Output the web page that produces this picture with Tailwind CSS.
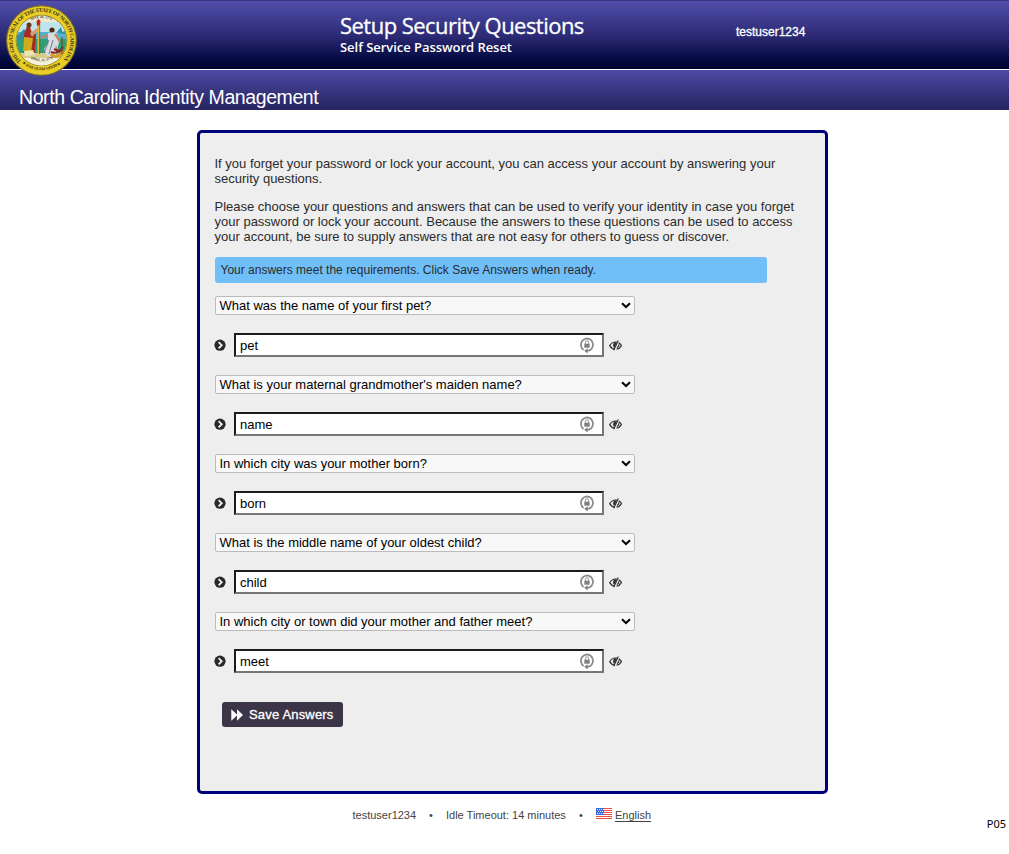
<!DOCTYPE html>
<html lang="en">
<head>
<meta charset="utf-8">
<title>Setup Security Questions</title>
<script src="https://cdn.jsdelivr.net/npm/@tailwindcss/browser@4"></script>
</head>
<body class="h-[854px] overflow-hidden bg-white font-['Liberation_Sans',Arial,sans-serif] text-[13px] leading-[15px] text-[#2b2b2b]">
<svg class="hidden">
  <symbol id="arrow" viewBox="0 0 12 12"><circle cx="6" cy="6.200" r="5.6" fill="#292929"/><path d="M4.6 3.100 7.7 6.200 4.6 9.300" fill="none" stroke="#eee" stroke-width="1.9"/></symbol>
  <symbol id="lock" viewBox="0 0 14 17"><path d="M3.600 13A6 6.300 0 1 1 11.600 11.800Q10 13.700 6.500 13.900" fill="none" stroke="#8b8b8b" stroke-width="1.800"/><path d="M4.200 13.800 7.600 11.200V16.600Z" fill="#808080"/><path d="M4.300 6.700h5.400v4H4.300z" fill="#808080"/><path d="M5.400 7V5.400a1.600 1.600 0 0 1 3.200 0V7" fill="none" stroke="#909090" stroke-width="1"/></symbol>
  <symbol id="eye" viewBox="0 0 13 11"><path d="M6 9.2C3.600 9 1.700 7.500.7 5.600 2.200 3.200 4.200 2 6.500 2l1.400.2M9.700 2.900C11 3.600 11.900 4.600 12.400 5.600 11.300 7.600 9.600 8.900 7.500 9.200" fill="none" stroke="#303030" stroke-width="1.200"/><path d="M6.300 2.600C3.800 3 3.300 6.300 5.200 7.900L7.800 2.900Z" fill="#303030"/><path d="M9.300.6 4.700 10.200M10 4.300Q9.900 6.800 7.900 7.600" fill="none" stroke="#303030" stroke-width="1.100"/></symbol>
  <symbol id="chev" viewBox="0 0 10 7"><path d="M1 1.200 5 5 9 1.200" fill="none" stroke="#000" stroke-width="2"/></symbol>
</svg>
<header class="relative h-[110px] text-white">
  <div class="flex h-[70px] border-t border-b border-t-[#393783] border-b-white bg-linear-to-b from-[#504eaa] via-[#2d2b76] to-[#00002f]">
    <div class="ml-[340px] w-[396px] pt-[10px] font-['Open_Sans',sans-serif]">
      <h1 class="text-[22px] font-medium leading-[28px] tracking-[-0.53px] whitespace-nowrap [-webkit-text-stroke:0.3px_white]">Setup Security Questions</h1>
      <p class="mt-px text-[13px] font-semibold leading-[14px] tracking-[-0.04px] whitespace-nowrap">Self Service Password Reset</p>
    </div>
    <div class="pt-[24px] text-[12px] leading-[14px] [-webkit-text-stroke:0.3px_white]">testuser1234</div>
  </div>
  <div class="h-[40px] bg-linear-to-b from-[#4d4ba5] to-[#25235f] pl-[19px] pt-[15px] text-[19.500px] leading-[24px] tracking-[-0.410px] whitespace-nowrap">North Carolina Identity Management</div>
  <svg class="absolute left-[5px] top-[4px] h-[73px] w-[73px]" viewBox="0 0 73 73">
    <defs><path id="ringTop" d="M16.200 57.500A29 29 0 1 1 56.800 57.500"/><path id="ringBot" d="M17 59.300A31 31 0 0 0 56 59.300"/><path id="inTop" d="M19 22A23 23 0 0 1 54 22"/><path id="inBot" d="M24 53.500A23 23 0 0 0 49 53.500"/><clipPath id="sealClip"><circle cx="36.500" cy="36.500" r="25"/></clipPath></defs>
    <circle cx="36.500" cy="36.500" r="35.500" fill="#776b32"/><circle cx="36.500" cy="36.500" r="34.300" fill="#e9cf25"/><circle cx="36.500" cy="36.500" r="25.800" fill="#927f20"/>
    <g clip-path="url(#sealClip)">
      <path fill="#eee9cf" d="M10 10h54v54H10z"/><path fill="#c0e4ec" d="M10 18h54v11H10z"/><path fill="#54b2cf" d="M10 28h54v8H10z"/><path fill="#2e9f75" d="M10 35h54v14H10z"/><path fill="#d7cd8a" d="M10 49h54v5H10z"/><path fill="#f2efda" d="M10 54h54v10H10z"/>
      <path d="M12 32l7-7 5 6v5H12zM52 28l4-5 2 7zM57 29l3-3 1 5z" fill="#358da2"/>
      <path d="M22 22l3 1 2 6 4 1-1 19-12-1 1-18z" fill="#a42c24"/><path d="M19 33l9 1-2 14-8-1z" fill="#d3aa1e"/><path d="M25 29l9-6 1 2-8 8z" fill="#d79e6c"/><circle cx="24" cy="21" r="2.500" fill="#6a351e"/><path d="M33.500 20v30" stroke="#e0b83a" stroke-width="2"/><path d="M34.700 20v30" stroke="#6f311b" stroke-width=".6"/><path d="M31.500 17l2-2 2 2-.5 4-3 1z" fill="#c8251c"/><path d="M19 47l9-1 2 5-10 1z" fill="#ede5b0"/>
      <circle cx="47" cy="26" r="2.600" fill="#4f2918"/><path d="M43 29l8-1 3 10-2 9 2 6-12-1-3-7 4-6z" fill="#d9dce3"/><path d="M43 31l-7 3M50 30l5 8" stroke="#c78557" stroke-width="2"/><path d="M44 36l-5 13M48 36l-4 14M51 42l1 9" stroke="#6e7888" stroke-width="1"/><path d="M46 48c4 2 9 0 12-5M49 45l9 4" stroke="#8c241c" stroke-width="2" fill="none"/><path d="M46 50c3 4 9 3 12-3" stroke="#d49d23" stroke-width="3" fill="none"/><path d="M57 33v17" stroke="#653c24"/>
    </g>
    <g fill="#3e3512" font-family="Liberation Serif,serif" font-weight="700">
      <text font-size="5.600"><textPath href="#ringTop" textLength="134">THE GREAT SEAL OF THE STATE OF NORTH CAROLINA</textPath></text>
      <text font-size="4"><textPath href="#ringBot" textLength="42">★ ESSE QUAM VIDERI ★</textPath></text>
      <text font-size="3.500"><textPath href="#inTop" startOffset="50%" text-anchor="middle">MAY 20, 1775</textPath></text>
      <text font-size="3.500"><textPath href="#inBot" startOffset="50%" text-anchor="middle">APRIL 12, 1776</textPath></text>
    </g>
  </svg>
</header>
<main class="ml-[197px] mt-[20px] h-[664px] w-[631px] rounded-[5px] border-[3px] border-[#00007d] bg-[#eee] pl-[14.500px] pt-[23px]">
  <p class="whitespace-nowrap">If you forget your password or lock your account, you can access your account by answering your<br>security questions.</p>
  <p class="mt-[13px] whitespace-nowrap">Please choose your questions and answers that can be used to verify your identity in case you forget<br>your password or lock your account. Because the answers to these questions can be used to access<br>your account, be sure to supply answers that are not easy for others to guess or discover.</p>
  <div class="mt-[13px] h-[26px] w-[552px] rounded-[3px] bg-[#70bff9] pl-[6px] text-[12px] leading-[26px]">Your answers meet the requirements. Click Save Answers when ready.</div>
  <div class="mt-[13px] flex flex-col gap-[18px] text-black">
    <div class="h-[61px]">
      <div class="flex h-[19px] w-[420px] items-center justify-between rounded-[2px] border border-[#bbb] bg-[#f8f8f8] pl-[4px] pr-[3px]"><span>What was the name of your first pet?</span><svg class="h-[7px] w-[10px]"><use href="#chev"/></svg></div>
      <div class="-ml-[0.500px] mt-[18px] flex items-center"><svg class="mr-[8px] h-[12px] w-[12px]"><use href="#arrow"/></svg><div class="flex h-[24px] w-[370px] items-center justify-between border-2 border-t-[#1c1c1c] border-l-[#1c1c1c] border-r-[#767676] border-b-[#767676] bg-white pl-[4px] pr-[8px]"><span>pet</span><svg class="h-[17px] w-[14px]"><use href="#lock"/></svg></div><svg class="ml-[5px] h-[11px] w-[13px]"><use href="#eye"/></svg></div>
    </div>
    <div class="h-[61px]">
      <div class="flex h-[19px] w-[420px] items-center justify-between rounded-[2px] border border-[#bbb] bg-[#f8f8f8] pl-[4px] pr-[3px]"><span>What is your maternal grandmother's maiden name?</span><svg class="h-[7px] w-[10px]"><use href="#chev"/></svg></div>
      <div class="-ml-[0.500px] mt-[18px] flex items-center"><svg class="mr-[8px] h-[12px] w-[12px]"><use href="#arrow"/></svg><div class="flex h-[24px] w-[370px] items-center justify-between border-2 border-t-[#1c1c1c] border-l-[#1c1c1c] border-r-[#767676] border-b-[#767676] bg-white pl-[4px] pr-[8px]"><span>name</span><svg class="h-[17px] w-[14px]"><use href="#lock"/></svg></div><svg class="ml-[5px] h-[11px] w-[13px]"><use href="#eye"/></svg></div>
    </div>
    <div class="h-[61px]">
      <div class="flex h-[19px] w-[420px] items-center justify-between rounded-[2px] border border-[#bbb] bg-[#f8f8f8] pl-[4px] pr-[3px]"><span>In which city was your mother born?</span><svg class="h-[7px] w-[10px]"><use href="#chev"/></svg></div>
      <div class="-ml-[0.500px] mt-[18px] flex items-center"><svg class="mr-[8px] h-[12px] w-[12px]"><use href="#arrow"/></svg><div class="flex h-[24px] w-[370px] items-center justify-between border-2 border-t-[#1c1c1c] border-l-[#1c1c1c] border-r-[#767676] border-b-[#767676] bg-white pl-[4px] pr-[8px]"><span>born</span><svg class="h-[17px] w-[14px]"><use href="#lock"/></svg></div><svg class="ml-[5px] h-[11px] w-[13px]"><use href="#eye"/></svg></div>
    </div>
    <div class="h-[61px]">
      <div class="flex h-[19px] w-[420px] items-center justify-between rounded-[2px] border border-[#bbb] bg-[#f8f8f8] pl-[4px] pr-[3px]"><span>What is the middle name of your oldest child?</span><svg class="h-[7px] w-[10px]"><use href="#chev"/></svg></div>
      <div class="-ml-[0.500px] mt-[18px] flex items-center"><svg class="mr-[8px] h-[12px] w-[12px]"><use href="#arrow"/></svg><div class="flex h-[24px] w-[370px] items-center justify-between border-2 border-t-[#1c1c1c] border-l-[#1c1c1c] border-r-[#767676] border-b-[#767676] bg-white pl-[4px] pr-[8px]"><span>child</span><svg class="h-[17px] w-[14px]"><use href="#lock"/></svg></div><svg class="ml-[5px] h-[11px] w-[13px]"><use href="#eye"/></svg></div>
    </div>
    <div class="h-[61px]">
      <div class="flex h-[19px] w-[420px] items-center justify-between rounded-[2px] border border-[#bbb] bg-[#f8f8f8] pl-[4px] pr-[3px]"><span>In which city or town did your mother and father meet?</span><svg class="h-[7px] w-[10px]"><use href="#chev"/></svg></div>
      <div class="-ml-[0.500px] mt-[18px] flex items-center"><svg class="mr-[8px] h-[12px] w-[12px]"><use href="#arrow"/></svg><div class="flex h-[24px] w-[370px] items-center justify-between border-2 border-t-[#1c1c1c] border-l-[#1c1c1c] border-r-[#767676] border-b-[#767676] bg-white pl-[4px] pr-[8px]"><span>meet</span><svg class="h-[17px] w-[14px]"><use href="#lock"/></svg></div><svg class="ml-[5px] h-[11px] w-[13px]"><use href="#eye"/></svg></div>
    </div>
  </div>
  <button class="ml-[7.500px] mt-[29px] flex h-[25px] w-[121px] items-center rounded-[3px] bg-[#3c3548] pl-[9px] text-[13px] tracking-[0.180px] text-white [-webkit-text-stroke:0.3px_white] whitespace-nowrap"><svg class="mr-[6px] h-[12px] w-[12px]" viewBox="0 0 12 12"><path d="M.3.300 6 5.400V.300L12 6 6 11.700V6.600L.3 11.700Z" fill="#fff"/></svg>Save Answers</button>
</main>
<footer class="flex h-[60px] pl-[352.500px] pt-[14px] text-[11px] leading-[14px] text-[#444] whitespace-nowrap">
  <span class="w-[76.500px]">testuser1234</span><span class="w-[17px]">•</span><span class="w-[133px]">Idle Timeout: 14 minutes</span><span class="w-[17px]">•</span>
  <svg class="mr-[3px] h-[11px] w-[16px]" viewBox="0 0 16 11"><path fill="#fff" d="M0 0h16v11H0z"/><path d="M0 .500h16M0 2.500h16M0 4.500h16M0 6.500h16M0 8.500h16M0 10.500h16" stroke="#ee4b3e"/><path fill="#3c6de0" d="M0 0h8v7H0z"/><path d="M1 1.500h7M2 3.500h6M1 5.500h7" stroke="#dce7ff" stroke-dasharray="1 1"/></svg>
  <span class="underline underline-offset-2">English</span>
  <span class="ml-auto mr-[3px] mt-[9px] font-['Noto_Sans',sans-serif] text-[11px] leading-[14px] text-black">P05</span>
</footer>
</body>
</html>
